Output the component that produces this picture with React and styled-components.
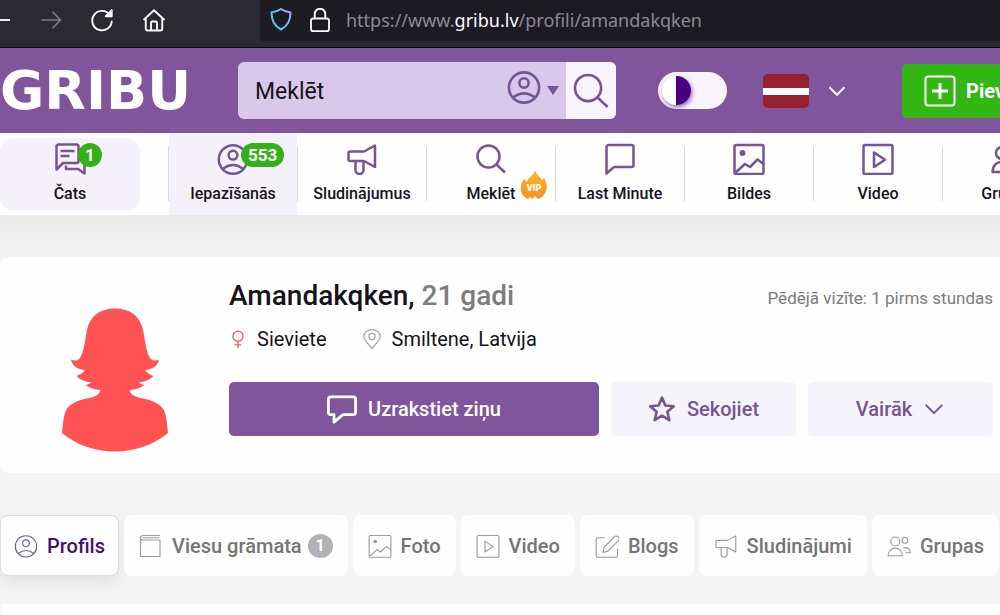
import styled, { createGlobalStyle } from "styled-components";
import { useState } from "react";

const strokes = {
  chat: (
    <>
      <path d="M2.5 26.5V3.5a2 2 0 0 1 2-2h18a2 2 0 0 1 2 2V18a2 2 0 0 1-2 2H9z" />
      <path d="M6.5 8h14M6.5 13h9M12 22.5V26h12l6.5 4.5V21" />
    </>
  ),
  user: (
    <>
      <circle cx="16" cy="16.5" r="14.2" />
      <circle cx="16" cy="12.2" r="4.4" />
      <path d="M5.5 26q10.500-8 21 0" />
    </>
  ),
  horn: (
    <>
      <path d="M4 8.500h14L29 2.500v21.500l-11-6H4a1.500 1.500 0 0 1-1.500-1.500v-6.500A1.500 1.500 0 0 1 4 8.500z" />
      <path d="M9.500 18v9a4 4 0 0 0 8 0v-9" />
    </>
  ),
  search: (
    <>
      <circle cx="13.500" cy="13.500" r="11" />
      <path d="M21.500 21.500l8.500 8" />
    </>
  ),
  bubble: (
    <path d="M2.500 30.500V4a2 2 0 0 1 2-2h23a2 2 0 0 1 2 2v18a2 2 0 0 1-2 2H10z" />
  ),
  message: (
    <path d="M4 3h24a2.500 2.500 0 0 1 2.500 2.500v14A2.500 2.500 0 0 1 28 22H17l-9.500 8v-8H4a2.500 2.500 0 0 1-2.500-2.500v-14A2.500 2.500 0 0 1 4 3z" />
  ),
  image: (
    <>
      <rect x="1.500" y="2" width="29" height="29" rx="1.500" />
      <circle cx="9.500" cy="10" r="1.700" fill="currentColor" />
      <path d="M2.500 29.500L12 21l5 3 7.500-7.500 6 4.500" />
    </>
  ),
  video: (
    <>
      <rect x="1.500" y="2" width="29" height="29" rx="1.500" />
      <path d="M12 9.500v14.500l11-7.200z" />
    </>
  ),
  group: (
    <>
      <circle cx="11" cy="10" r="6" />
      <circle cx="24" cy="8.500" r="3.800" />
      <path d="M1.500 29c0-13.500 19-13.500 19 0zM22 18.500c5.500-1.500 9 1.500 9 6.500h-6" />
    </>
  ),
  book: (
    <path d="M2 5v25h26V8H5a3 3 0 0 1 0-6h23M5 5h22" />
  ),
  edit: (
    <>
      <path d="M13 5H3.500A2 2 0 0 0 1.500 7v22a2 2 0 0 0 2 2H28a2 2 0 0 0 2-2V20" />
      <path d="M12 18L26 3.500c3-2.500 8 2 5.500 5L17 23l-6.500 1.500z" />
    </>
  ),
  star: (
    <path d="M16 3l3.800 9 9.700.8-7.400 6.400 2.300 9.600-8.400-5.200-8.400 5.200 2.300-9.600-7.400-6.400 9.700-.8z" />
  ),
  down: <path d="M4 10l12 12 12-12" />,
  plus: (
    <>
      <rect x="1.500" y="1.500" width="29" height="29" rx="3" />
      <path d="M16 8v16M8 16h16" strokeWidth="3" />
    </>
  ),
  female: (
    <>
      <circle cx="16" cy="11" r="9" />
      <path d="M16 20v12M10 26.500h12" />
    </>
  ),
  pin: (
    <>
      <path d="M16 31C9 23 3 18 3 12a13 11 0 0 1 26 0c0 6-6 11-13 19z" />
      <circle cx="16" cy="12" r="5" />
    </>
  ),
  forward: <path d="M2 16h27M18 4l12 12-12 12" />,
  back: <path d="M0 16h32" />,
  home: (
    <>
      <path d="M2 16L16 3l14 13" />
      <path d="M5 14v14a2 2 0 0 0 2 2h18a2 2 0 0 0 2-2V14M12 30V20a2 2 0 0 1 2-2h4a2 2 0 0 1 2 2v10" />
    </>
  ),
  reload: (
    <>
      <path d="M26 8.500A13 13 0 1 0 29 17" />
      <path d="M29 3v8h-8z" fill="currentColor" />
    </>
  ),
  lock: (
    <>
      <rect x="4" y="14" width="24" height="17" rx="3" />
      <path d="M9 14V8a7 7 0 0 1 14 0v6" />
    </>
  ),
  translate: <path d="M2 7h28M16 1v6M7 7c2 10 8 16 18 20M25 7C22 17 14 24 3 27" />,
};

const Icon = ({ name, size = 32, weight = 2.5 }) => (
  <svg
    width={size}
    height={size}
    viewBox="0 0 32 32"
    fill="none"
    stroke="currentColor"
    strokeWidth={weight}
    strokeLinejoin="round"
    aria-hidden="true"
  >
    {strokes[name]}
  </svg>
);

const Shield = () => (
  <svg width="22" height="24" viewBox="0 0 22 24" fill="none" aria-hidden="true">
    <defs>
      <linearGradient id="shield" x1="1" y1="0" x2="0" y2="1">
        <stop offset="0" stopColor="#b9a5f5" />
        <stop offset="0.5" stopColor="#6fb4ee" />
        <stop offset="1" stopColor="#4fd8e8" />
      </linearGradient>
    </defs>
    <path
      d="M11 1c3 2 6 3 9.500 3.500C20.500 12 18 18 11 21.500 4 18 1.500 12 1.500 4.500 5 4 8 3 11 1z"
      stroke="url(#shield)"
      strokeWidth="2"
      strokeLinejoin="round"
    />
  </svg>
);

const Flag = () => (
  <svg width="46" height="34" viewBox="0 0 46 34" aria-hidden="true">
    <rect width="46" height="34" rx="5" fill="#96202f" />
    <rect y="14" width="46" height="7" fill="#fff" />
  </svg>
);

const Flame = () => (
  <svg width="30" height="32" viewBox="0 0 30 32" aria-hidden="true">
    <defs>
      <linearGradient id="flame" x1="0" y1="0" x2="0" y2="1">
        <stop offset="0" stopColor="#f8b632" />
        <stop offset="1" stopColor="#f7931e" />
      </linearGradient>
    </defs>
    <path
      d="M16 1c1 5 5 6 7 10l2-2c3 5 4 10 1 15-1 3-4 5-7 6l-3-3-2 3-3-2-2 2C4 28 1 23 2 17c0-3 2-5 3-7l3 3c1-5 7-6 8-12z"
      fill="url(#flame)"
    />
  </svg>
);

const Avatar = () => (
  <svg width="106" height="144" viewBox="0 0 106 144" role="img" aria-label="Amandakqken">
    <path
      d="M53 .5C38 .5 28 8 25 22c-2 8-2 16-5 24-2 6-6 8-11 5.500 1 6 6 10 14 10.500-2 3-5 5-8.500 6 4 4 9 6 15 6.500-2 1-3 2-6 2.500 4 3 9 4.500 15 5-1 4-4 6-9 7.500-9 2-20 4-25 12-3 6-3.500 14-4.500 23.500 15 12 33 18.500 53 18.500s38-6.500 53-18.500c-1-9.500-1.500-17.500-4.500-23.500-5-8-16-10-25-12-5-1.500-8-3.500-9-7.500 6-.5 11-2 15-5-3-.5-4-1.500-6-2.500 6-.5 11-2.500 15-6.500-3.500-1-6.500-3-8.500-6 8-.5 13-4.500 14-10.500-5 2.500-9 .5-11-5.500-3-8-3-16-5-24C78 8 68 .5 53 .5z"
      fill="#ff5353"
    />
  </svg>
);

const menuItems = [
  { icon: "user", label: "Iepazīšanās", count: 553, active: true },
  { icon: "horn", label: "Sludinājumus" },
  { icon: "search", label: "Meklēt", vip: true },
  { icon: "bubble", label: "Last Minute" },
  { icon: "image", label: "Bildes" },
  { icon: "video", label: "Video" },
  { icon: "group", label: "Grupas" },
];

const tabs = [
  { icon: "user", label: "Profils" },
  { icon: "book", label: "Viesu grāmata", count: 1 },
  { icon: "image", label: "Foto" },
  { icon: "video", label: "Video" },
  { icon: "edit", label: "Blogs" },
  { icon: "horn", label: "Sludinājumi" },
  { icon: "group", label: "Grupas" },
];

const App = () => {
  const [tab, setTab] = useState("Profils");

  return (
    <Page>
      <GlobalStyle />
      <BrowserBar>
        <BrowserControls>
          <BackButton aria-label="Back">
            <Icon name="back" size={10} weight={6} />
          </BackButton>
          <PlainButton aria-label="Forward" disabled>
            <Icon name="forward" size={22} />
          </PlainButton>
          <PlainButton aria-label="Reload">
            <Icon name="reload" size={24} />
          </PlainButton>
          <PlainButton aria-label="Home">
            <Icon name="home" size={24} />
          </PlainButton>
        </BrowserControls>
        <AddressBar>
          <Shield />
          <Icon name="lock" size={24} />
          <Address>
            https://www.<b>gribu.lv</b>/profili/amandakqken
          </Address>
          <PlainButton aria-label="Translate">
            <Icon name="translate" size={20} weight={3} />
          </PlainButton>
        </AddressBar>
      </BrowserBar>

      <Header>
        <Logo href="#">GRIBU</Logo>
        <Search>
          <SearchInput type="text" placeholder="Meklēt" aria-label="Meklēt" />
          <SearchType type="button" aria-label="Iepazīšanās">
            <Icon name="user" size={34} />
            <Caret />
          </SearchType>
          <SearchSubmit aria-label="Meklēt">
            <Icon name="search" size={38} weight={2.2} />
          </SearchSubmit>
        </Search>
        <Toggle type="checkbox" role="switch" aria-label="Tumšais režīms" />
        <Language aria-label="Latviešu">
          <Flag />
          <Icon name="down" size={20} weight={3} />
        </Language>
        <AddButton>
          <Icon name="plus" size={32} weight={2} />
          Pievienot
        </AddButton>
      </Header>

      <Menu>
        <ChatLink href="#">
          <MenuIcon>
            <Icon name="chat" />
            <Count>1</Count>
          </MenuIcon>
          Čats
        </ChatLink>
        {menuItems.map((item) => (
          <MenuCell key={item.label}>
            <Divider />
            <MenuLink href="#" $active={item.active}>
              <MenuIcon>
                <Icon name={item.icon} />
                {item.count && <Count>{item.count}</Count>}
              </MenuIcon>
              {item.label}
              {item.vip && (
                <Vip>
                  <Flame />
                  <span>VIP</span>
                </Vip>
              )}
            </MenuLink>
          </MenuCell>
        ))}
      </Menu>

      <Content>
        <ProfileCard>
          <AvatarBox>
            <Avatar />
          </AvatarBox>
          <Info>
            <TitleRow>
              <h1>
                Amandakqken, <span>21 gadi</span>
              </h1>
              <LastVisit>Pēdējā vizīte: 1 pirms stundas</LastVisit>
            </TitleRow>
            <Meta>
              <MetaItem $color="#e0676c">
                <Icon name="female" size={18} />
                <span>Sieviete</span>
              </MetaItem>
              <MetaItem $color="#a5a5a5">
                <Icon name="pin" size={20} weight={2} />
                <span>Smiltene, Latvija</span>
              </MetaItem>
            </Meta>
            <Actions>
              <ActionButton $main>
                <Icon name="message" size={30} weight={3} />
                Uzrakstiet ziņu
              </ActionButton>
              <ActionButton>
                <Icon name="star" size={28} weight={3} />
                Sekojiet
              </ActionButton>
              <ActionButton>
                Vairāk
                <Icon name="down" size={22} weight={3} />
              </ActionButton>
            </Actions>
          </Info>
        </ProfileCard>

        <Tabs role="tablist">
          {tabs.map(({ icon, label, count }) => (
            <Tab
              key={label}
              role="tab"
              aria-selected={tab === label}
              $active={tab === label}
              onClick={() => setTab(label)}
            >
              <Icon name={icon} size={24} weight={1.5} />
              <span>{label}</span>
              {count && <TabCount>{count}</TabCount>}
            </Tab>
          ))}
        </Tabs>

        <NextCard />
      </Content>
    </Page>
  );
};

export default App;

const GlobalStyle = createGlobalStyle`
  * {
    box-sizing: border-box;
  }
  body {
    margin: 0;
    background: #f4f4f4;
    color: #16131a;
    font-family: Roboto, "Liberation Sans", sans-serif;
  }
  button {
    border: 0;
    padding: 0;
    background: none;
    color: inherit;
    font: inherit;
    cursor: pointer;
  }
  a {
    color: inherit;
    text-decoration: none;
  }
  svg {
    display: block;
    flex: none;
  }
`;

const Page = styled.div`
  display: flex;
  flex-direction: column;
  min-height: 100vh;
  overflow: hidden;
`;

const BrowserBar = styled.div`
  display: flex;
  height: 48px;
  background: #2b2a33;
  border-bottom: 1px solid #08080a;
  color: #fbfbfe;
`;

const BrowserControls = styled.div`
  display: flex;
  flex: 0 0 260px;
  align-items: center;
  gap: 28px;
  height: 39px;
`;

const PlainButton = styled.button`
  flex: none;
  &:disabled {
    color: #7d7c84;
  }
`;

const BackButton = styled(PlainButton)`
  width: 12px;
`;

const AddressBar = styled.div`
  display: flex;
  flex: 1;
  align-items: center;
  gap: 16px;
  height: 41px;
  padding: 0 0 2px 10px;
  background: #1c1b22;
  border-radius: 0 0 0 4px;
`;

const Address = styled.div`
  flex: 0 0 644px;
  margin-left: -2px;
  color: #8b8a92;
  font: 18px/28px "Noto Sans", "Open Sans", sans-serif;
  b {
    color: #fbfbfe;
    font-weight: 400;
  }
`;

const Header = styled.header`
  display: flex;
  align-items: center;
  height: 85px;
  background: #81559b;
  color: #fff;
`;

const Logo = styled.a`
  flex: 0 0 238px;
  font: bold 54px/60px "DejaVu Sans", sans-serif;
`;

const Search = styled.form`
  display: flex;
  flex: 1 0 378px;
  height: 57px;
  margin-right: 42px;
  border-radius: 6px;
  background: #d9c8eb;
  color: #765592;
  overflow: hidden;
`;

const SearchInput = styled.input`
  flex: 1;
  min-width: 0;
  padding: 2px 0 0 17px;
  border: 0;
  outline: 0;
  background: none;
  color: #16131a;
  font: 23px/28px Roboto, sans-serif;
  &::placeholder {
    color: #16131a;
    opacity: 1;
  }
`;

const SearchType = styled.button`
  display: flex;
  align-items: center;
  gap: 6px;
  padding: 0 7px 8px 0;
`;

const Caret = styled.span`
  margin-top: 8px;
  border: 6px solid transparent;
  border-top: 9px solid #765592;
  border-bottom: 0;
`;

const SearchSubmit = styled.button`
  display: flex;
  align-items: center;
  justify-content: center;
  width: 50px;
  background: #f7f4fc;
`;

const Toggle = styled.input`
  appearance: none;
  flex: none;
  width: 69px;
  height: 37px;
  margin: 0 36px 0 0;
  padding: 4px;
  border-radius: 19px;
  background: #f7f4fc;
  cursor: pointer;
  &::before {
    content: "";
    display: block;
    width: 29px;
    height: 29px;
    border-radius: 50%;
    background: linear-gradient(90deg, #fff 50%, #4b0082 50%);
    box-shadow: 1px 2px 4px rgba(75, 0, 130, 0.6);
  }
  &:checked::before {
    margin-left: 32px;
  }
`;

const Language = styled.button`
  display: flex;
  flex: none;
  align-items: center;
  gap: 18px;
  margin-right: 55px;
`;

const AddButton = styled.button`
  display: flex;
  flex: none;
  align-items: center;
  gap: 10px;
  height: 54px;
  padding: 0 22px;
  border-radius: 5px;
  background: #32b713;
  font-size: 20px;
  font-weight: 700;
`;

const Menu = styled.nav`
  display: flex;
  align-items: center;
  height: 82px;
  background: #fefefe;
  font-size: 16px;
  font-weight: 500;
  line-height: 20px;
`;

const MenuCell = styled.div`
  display: flex;
  flex: 1 0 129px;
  align-items: center;
  height: 100%;
`;

const Divider = styled.span`
  width: 1px;
  height: 54px;
  background: #d9d8db;
`;

const MenuLink = styled.a`
  position: relative;
  display: flex;
  flex: 1;
  flex-direction: column;
  align-items: center;
  gap: 9px;
  height: 100%;
  padding-top: 10px;
  background: ${({ $active }) => ($active ? "#f5f1fb" : "none")};
  white-space: nowrap;
`;

const ChatLink = styled(MenuLink)`
  flex: 0 0 140px;
  height: 73px;
  margin-right: 28px;
  padding-top: 5px;
  border-radius: 14px;
  background: #f5f1fb;
`;

const MenuIcon = styled.span`
  position: relative;
  color: #765592;
`;

const Count = styled.span`
  position: absolute;
  top: 0;
  left: 24px;
  min-width: 24px;
  padding: 0 7px;
  border-radius: 12px;
  background: #34b01a;
  color: #fff;
  font-size: 17px;
  font-weight: 700;
  line-height: 24px;
  text-align: center;
`;

const Vip = styled.span`
  position: absolute;
  right: 6px;
  bottom: 14px;
  color: #fff;
  font-size: 9px;
  font-weight: 900;
  span {
    position: absolute;
    inset: 0;
    line-height: 38px;
    text-align: center;
  }
`;

const Content = styled.main`
  display: flex;
  flex: 1;
  flex-direction: column;
  padding-top: 42px;
  background: linear-gradient(#eaeaea, #f4f4f4 42px);
`;

const Card = styled.section`
  background: #fefefe;
  border-radius: 8px 0 0 8px;
`;

const ProfileCard = styled(Card)`
  display: flex;
  padding: 21px 7px 21px 0;
`;

const AvatarBox = styled.div`
  display: flex;
  flex: 0 0 229px;
  align-items: flex-end;
  justify-content: center;
  height: 174px;
`;

const Info = styled.div`
  flex: 1;
`;

const TitleRow = styled.div`
  display: flex;
  align-items: center;
  justify-content: space-between;
  h1 {
    margin: 0;
    font-size: 28px;
    font-weight: 500;
    line-height: 36px;
  }
  h1 span {
    color: #7d7d7d;
  }
`;

const LastVisit = styled.span`
  padding-top: 4px;
  color: #7b7b7b;
  font-size: 17px;
`;

const Meta = styled.div`
  display: flex;
  gap: 35px;
  margin: 11px 0 29px;
`;

const MetaItem = styled.div`
  display: flex;
  align-items: center;
  gap: 10px;
  color: ${({ $color }) => $color};
  font-size: 20px;
  line-height: 28px;
  span {
    color: #16131a;
  }
`;

const Actions = styled.div`
  display: grid;
  grid-template-columns: 2fr 1fr 1fr;
  gap: 12px;
`;

const ActionButton = styled.button`
  display: flex;
  align-items: center;
  justify-content: center;
  gap: 11px;
  height: 54px;
  border-radius: 5px;
  background: ${({ $main }) => ($main ? "#81559b" : "#f5f3fb")};
  color: ${({ $main }) => ($main ? "#fff" : "#765592")};
  font-size: 20px;
  font-weight: 500;
`;

const Tabs = styled.div`
  display: flex;
  gap: 5px;
  margin: 42px 0 28px;
`;

const Tab = styled.button`
  display: flex;
  flex: none;
  align-items: center;
  height: 61px;
  padding: 0 ${({ $active }) => ($active ? 13 : 15)}px;
  border: ${({ $active }) => ($active ? "1px solid #dcdadd" : "0")};
  border-radius: 8px;
  background: #fefefe;
  box-shadow: ${({ $active }) =>
    $active ? "0 6px 16px rgba(0, 0, 0, 0.08)" : "none"};
  color: ${({ $active }) => ($active ? "#735f86" : "#9a9a9a")};
  font-size: 20px;
  font-weight: 500;
  span {
    margin-left: 9px;
    color: ${({ $active }) => ($active ? "#42106c" : "#757575")};
  }
`;

const TabCount = styled.b`
  width: 25px;
  margin-left: 6px;
  border-radius: 50%;
  background: #b2b1b5;
  color: #fff;
  font-size: 16px;
  line-height: 24px;
`;

const NextCard = styled(Card)`
  flex: 1;
`;
